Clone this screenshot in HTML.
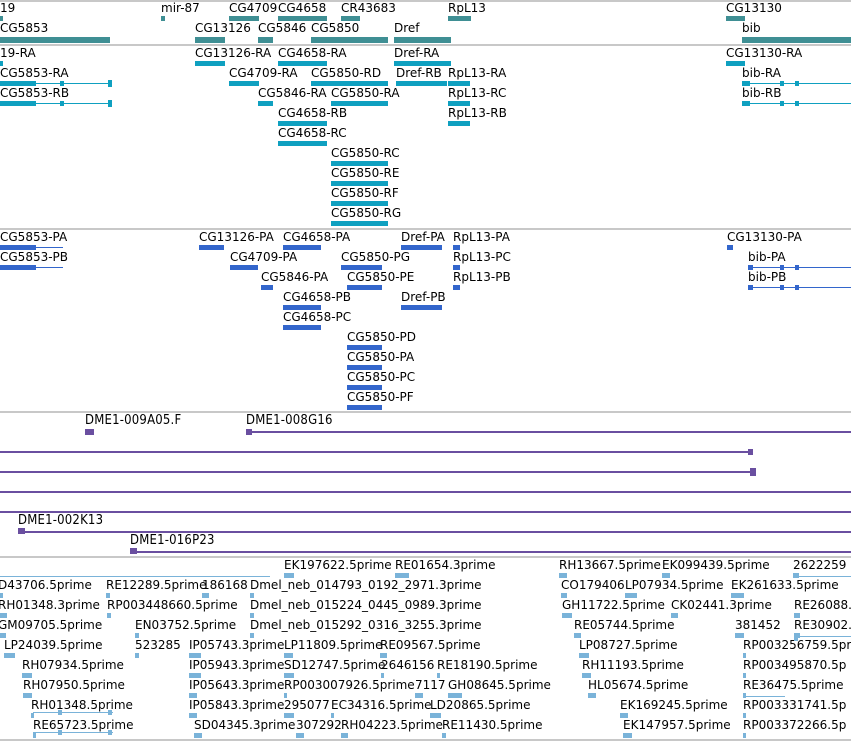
<!DOCTYPE html>
<html><head><meta charset="utf-8"><style>
body{margin:0;width:851px;height:741px;overflow:hidden;background:#fff;position:relative;font-family:"DejaVu Sans","Liberation Sans",sans-serif;}
.t{position:absolute;font-size:12px;line-height:14px;white-space:nowrap;color:#000;}
.p{position:absolute;font-family:"DejaVu Sans Condensed","DejaVu Sans",sans-serif;font-size:13px;letter-spacing:0.2px;line-height:14px;white-space:nowrap;color:#000;}
.b{position:absolute;}
.s{position:absolute;left:0;width:851px;height:2px;background:#c8c8c8;}
</style></head><body>
<div id="r"></div>
<script>
var H='';
function T(x,y,s,c){H+='<div class="'+(c||'t')+'" style="left:'+x+'px;top:'+y+'px">'+s+'</div>';}
function B(x,y,w,h,col){H+='<div class="b" style="left:'+x+'px;top:'+y+'px;width:'+w+'px;height:'+h+'px;background:'+col+'"></div>';}
function S(y){H+='<div class="s" style="top:'+y+'px"></div>';}
S(0);S(44);S(228);S(411);S(556);S(739);
var G='#3f8f94';
[[0,'19',0,3],[161,'mir-87',161,4],[229,'CG4709',229,30],[278,'CG4658',278,49],[341,'CR43683',341,19],[448,'RpL13',448,23],[726,'CG13130',726,19]].forEach(function(a){T(a[0],1,a[1]);B(a[2],16,a[3],5,G);});
[[0,'CG5853',0,110],[195,'CG13126',195,30],[258,'CG5846',258,15],[311,'CG5850',311,77],[394,'Dref',394,57],[742,'bib',742,109]].forEach(function(a){T(a[0],21,a[1]);B(a[2],37,a[3],6,G);});
var C='#0fa0c0';
function R(x,y,s,bx,bw,lx,lw,col){T(x,y,s);B(bx,y+15,bw,5,col);if(lw)B(lx,y+17,lw,1,col);}
R(0,46,'19-RA',0,3,0,0,C);R(195,46,'CG13126-RA',195,30,0,0,C);R(278,46,'CG4658-RA',278,49,0,0,C);R(394,46,'Dref-RA',394,57,0,0,C);R(726,46,'CG13130-RA',726,19,0,0,C);
R(0,66,'CG5853-RA',0,36,0,111,C);B(60,81,4,5,C);B(108,80,4,7,C);R(229,66,'CG4709-RA',229,30,0,0,C);R(311,66,'CG5850-RD',311,77,0,0,C);R(396,66,'Dref-RB',396,51,0,0,C);R(448,66,'RpL13-RA',448,22,0,0,C);R(742,66,'bib-RA',742,8,742,109,C);B(780,81,4,5,C);B(795,81,4,5,C);
R(0,86,'CG5853-RB',0,36,0,111,C);B(60,101,4,5,C);B(108,100,4,7,C);R(258,86,'CG5846-RA',258,15,0,0,C);R(331,86,'CG5850-RA',331,57,0,0,C);R(448,86,'RpL13-RC',448,22,0,0,C);R(742,86,'bib-RB',742,8,742,109,C);B(780,101,4,5,C);B(795,101,4,5,C);
R(278,106,'CG4658-RB',278,49,0,0,C);R(448,106,'RpL13-RB',448,22,0,0,C);
R(278,126,'CG4658-RC',278,49,0,0,C);
['RC','RE','RF','RG'].forEach(function(s,i){R(331,146+20*i,'CG5850-'+s,331,57,0,0,C);});
var P='#3366cc';
R(0,230,'CG5853-PA',0,36,0,63,P);R(199,230,'CG13126-PA',199,25,0,0,P);R(283,230,'CG4658-PA',283,38,0,0,P);R(401,230,'Dref-PA',401,41,0,0,P);R(453,230,'RpL13-PA',453,7,0,0,P);R(727,230,'CG13130-PA',727,6,0,0,P);
R(0,250,'CG5853-PB',0,36,0,63,P);R(230,250,'CG4709-PA',230,28,0,0,P);R(341,250,'CG5850-PG',341,41,0,0,P);R(453,250,'RpL13-PC',453,7,0,0,P);R(748,250,'bib-PA',748,5,748,103,P);B(780,265,4,5,P);B(795,265,4,5,P);
R(261,270,'CG5846-PA',261,12,0,0,P);R(347,270,'CG5850-PE',347,35,0,0,P);R(453,270,'RpL13-PB',453,7,0,0,P);R(748,270,'bib-PB',748,5,748,103,P);B(780,285,4,5,P);B(795,285,4,5,P);
R(283,290,'CG4658-PB',283,38,0,0,P);R(401,290,'Dref-PB',401,41,0,0,P);
R(283,310,'CG4658-PC',283,38,0,0,P);
['PD','PA','PC','PF'].forEach(function(s,i){R(347,330+20*i,'CG5850-'+s,347,35,0,0,P);});
var V='#6a4fa0';
T(85,414,'DME1-009A05.F','p');B(85,429,9,6,V);
T(246,414,'DME1-008G16','p');B(246,429,6,6,V);B(246,431,605,2,V);
B(0,451,750,2,V);B(748,449,5,6,V);
B(0,471,755,2,V);B(750,468,6,8,V);
B(0,491,851,2,V);B(0,511,851,2,V);
T(18,514,'DME1-002K13','p');B(18,528,7,6,V);B(18,531,833,2,V);
T(130,534,'DME1-016P23','p');B(130,548,7,6,V);B(130,551,721,2,V);
var E='#7ab3d9';
var rows=[
[[284,'EK197622.5prime',10],[395,'RE01654.3prime',14],[559,'RH13667.5prime',8],[662,'EK099439.5prime',8],[793,'2622259',6]],
[[-2,'D43706.5prime',3],[106,'RE12289.5prime',4],[202,'186168',7],[250,'Dmel_neb_014793_0192_2971.3prime',4],[561,'CO179406',6],[625,'LP07934.5prime',12],[731,'EK261633.5prime',13]],
[[-2,'RH01348.3prime',7],[107,'RP003448660.5prime',4],[250,'Dmel_neb_015224_0445_0989.3prime',4],[562,'GH11722.5prime',10],[671,'CK02441.3prime',7],[794,'RE26088.',6]],
[[-2,'GM09705.5prime',6],[135,'EN03752.5prime',4],[250,'Dmel_neb_015292_0316_3255.3prime',4],[574,'RE05744.5prime',7],[735,'381452',9],[794,'RE30902.',6]],
[[4,'LP24039.5prime',11],[135,'523285',4],[189,'IP05743.3prime',12],[284,'LP11809.5prime',9],[380,'RE09567.5prime',7],[579,'LP08727.5prime',10],[743,'RP003256759.5pr',3]],
[[22,'RH07934.5prime',10],[189,'IP05943.3prime',12],[284,'SD12747.5prime',10],[381,'2646156',3],[437,'RE18190.5prime',3],[582,'RH11193.5prime',9],[743,'RP003495870.5p',3]],
[[23,'RH07950.5prime',9],[189,'IP05643.3prime',8],[284,'RP003007926.5prime',3],[415,'7117',8],[448,'GH08645.5prime',14],[588,'HL05674.5prime',8],[743,'RE36475.5prime',3]],
[[31,'RH01348.5prime',3],[189,'IP05843.3prime',8],[284,'295077',10],[331,'EC34316.5prime',3],[430,'LD20865.5prime',11],[620,'EK169245.5prime',8],[743,'RP003331741.5p',3]],
[[33,'RE65723.5prime',3],[194,'SD04345.3prime',8],[296,'307292',8],[341,'RH04223.5prime',7],[442,'RE11430.5prime',4],[623,'EK147957.5prime',9],[743,'RP003372266.5p',3]]];
rows.forEach(function(r,i){var y=558+20*i;r.forEach(function(a){T(a[0],y,a[1]);B(Math.max(a[0],0),y+15,a[2],5,E);});});
B(0,576,270,1,E);B(794,576,57,1,E);B(794,636,57,1,E);B(794,636,4,5,E);B(743,696,42,1,E);
B(33,712,80,1,E);B(33,732,80,1,E);B(58,710,4,5,E);B(108,710,4,5,E);B(58,730,4,5,E);B(108,730,4,5,E);
document.getElementById('r').innerHTML=H;
</script>
</body></html>
